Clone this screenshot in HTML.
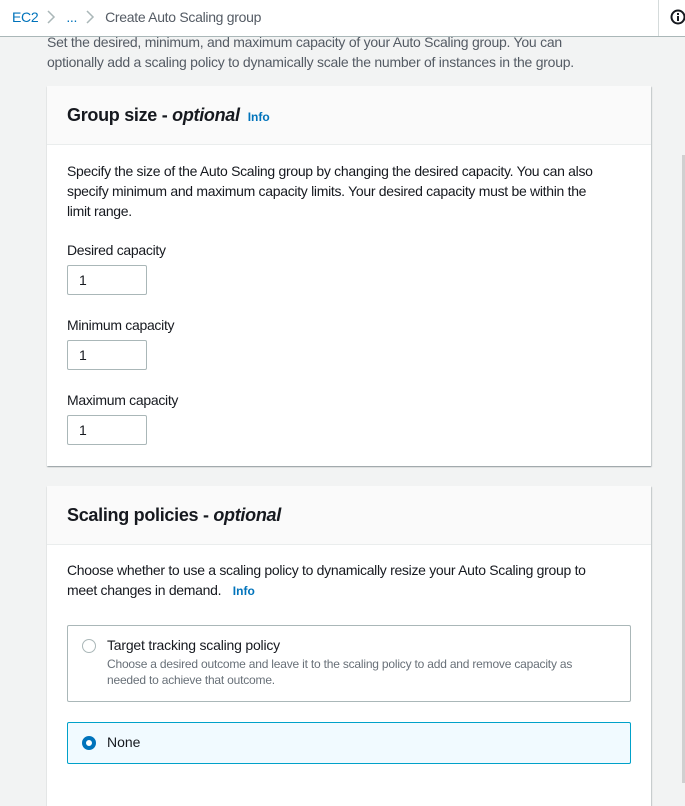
<!DOCTYPE html>
<html><head><style>
*{box-sizing:border-box;margin:0;padding:0}
body{width:685px;height:783px;overflow:hidden;background:#f2f3f3;font-family:"Liberation Sans",sans-serif;color:#16191f;position:relative;font-size:14px}
.hdr{position:absolute;left:0;top:0;width:685px;height:37px;background:#fff;border-bottom:1px solid #aab7b8;z-index:2}
.hdr .bc{position:absolute;left:12px;top:9px;font-size:14px;color:#545b64;letter-spacing:-0.3px}
.div{position:absolute;left:658px;top:0;width:1px;height:36px;background:#d5dbdb}
.intro{position:absolute;left:47px;top:32px;color:#545b64;line-height:20px;font-size:14px;letter-spacing:-0.25px}
.card{position:absolute;left:47px;width:604px;background:#fff;box-shadow:0 1px 1px rgba(0,28,36,.3),1px 1px 1px rgba(0,28,36,.15)}
.ch{height:59px;background:#fafafa;border-bottom:1px solid #eaeded;padding:19px 20px;font-size:18px;font-weight:bold;letter-spacing:-0.3px}
.info{font-size:12px;color:#0073bb;font-weight:bold;margin-left:8px;letter-spacing:0}
.t{position:absolute;left:20px;line-height:20px;font-size:14px;letter-spacing:-0.3px}
.inp{position:absolute;left:20px;width:80px;height:30px;border:1px solid #aab7b8;border-radius:2px;padding:6px 11px;font-size:14px}
.rb{position:absolute;left:20px;width:564px;border:1px solid #aab7b8;border-radius:2px}
.sb{position:absolute;left:682px;top:155px;width:3px;height:628px;background:#d0d0d0}
</style></head><body>
<div class="hdr"><div class="bc"><span style="color:#0073bb">EC2</span><svg width="28" height="14" viewBox="0 0 28 14" style="vertical-align:-2px"><path d="M10 1l6 6-6 6" fill="none" stroke="#aab7b8" stroke-width="1.5"/></svg><span style="color:#0073bb">...</span><svg width="28" height="14" viewBox="0 0 28 14" style="vertical-align:-2px"><path d="M10 1l6 6-6 6" fill="none" stroke="#aab7b8" stroke-width="1.5"/></svg>Create Auto Scaling group</div>
<div class="div"></div>
<svg style="position:absolute;left:670px;top:9px" width="16" height="16" viewBox="0 0 16 16"><circle cx="8" cy="8" r="6.5" fill="none" stroke="#16191f" stroke-width="2"/><rect x="7" y="7" width="2" height="5" fill="#16191f"/><rect x="7" y="4" width="2" height="2" fill="#16191f"/></svg></div>
<div class="intro">Set the desired, minimum, and maximum capacity of your Auto Scaling group. You can<br>optionally add a scaling policy to dynamically scale the number of instances in the group.</div>
<div class="card" style="top:86px;height:380px">
<div class="ch">Group size - <i>optional</i><span class="info">Info</span></div>
<div class="t" style="top:75px">Specify the size of the Auto Scaling group by changing the desired capacity. You can also<br>specify minimum and maximum capacity limits. Your desired capacity must be within the<br>limit range.</div>
<div class="t" style="top:154px">Desired capacity</div><div class="inp" style="top:179px">1</div>
<div class="t" style="top:229px">Minimum capacity</div><div class="inp" style="top:254px">1</div>
<div class="t" style="top:304px">Maximum capacity</div><div class="inp" style="top:329px">1</div>
</div>
<div class="card" style="top:486px;height:320px">
<div class="ch">Scaling policies - <i>optional</i></div>
<div class="t" style="top:74px">Choose whether to use a scaling policy to dynamically resize your Auto Scaling group to<br>meet changes in demand. <span class="info">Info</span></div>
<div class="rb" style="top:139px;height:77px">
<div style="position:absolute;left:14px;top:13px;width:14px;height:14px;border:1px solid #aab7b8;border-radius:50%"></div>
<div style="position:absolute;left:39px;top:11px;font-size:14px;letter-spacing:-0.2px">Target tracking scaling policy</div>
<div style="position:absolute;left:39px;top:30px;font-size:12px;color:#687078;line-height:16px;letter-spacing:-0.2px">Choose a desired outcome and leave it to the scaling policy to add and remove capacity as<br>needed to achieve that outcome.</div></div>
<div class="rb" style="top:236px;height:42px;background:#f1faff;border-color:#00a1c9">
<div style="position:absolute;left:14px;top:13px;width:14px;height:14px;border:4px solid #0073bb;border-radius:50%;background:#fff"></div>
<div style="position:absolute;left:39px;top:11px;font-size:14px">None</div></div>
</div>
<div class="sb"></div>
</body></html>
